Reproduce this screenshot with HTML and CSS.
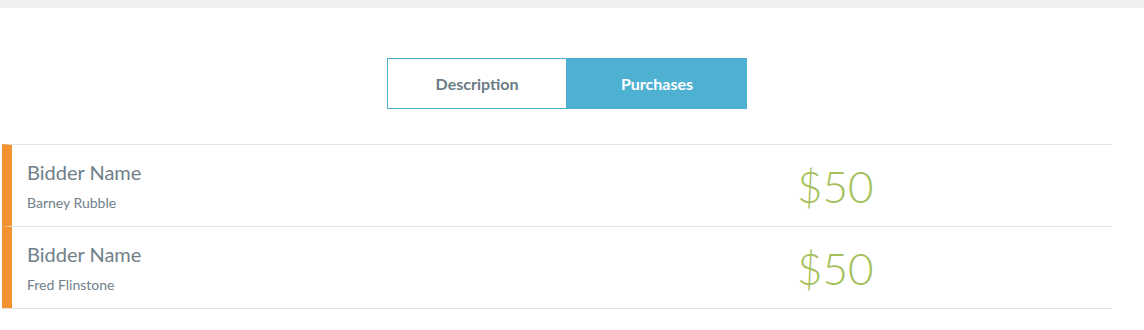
FILE: index.html
```html
<!DOCTYPE html>
<html>
<head>
<meta charset="utf-8">
<link rel="stylesheet" href="styles.css">
</head>
<body>
<div class="topbar"></div>
<div class="tabs-wrap">
  <div class="tabs">
    <div class="tab">Description</div>
    <div class="tab active">Purchases</div>
  </div>
</div>
<div class="list">
  <div class="row">
    <div class="info">
      <div class="label">Bidder Name</div>
      <div class="name">Barney Rubble</div>
    </div>
    <div class="price">$50</div>
  </div>
  <div class="row">
    <div class="info">
      <div class="label">Bidder Name</div>
      <div class="name">Fred Flinstone</div>
    </div>
    <div class="price">$50</div>
  </div>
</div>
</body>
</html>
```

FILE: styles.css
```css
html, body {
  margin: 0;
  padding: 0;
  background: #fff;
  font-family: Lato, "Open Sans", sans-serif;
}
.topbar {
  height: 8px;
  background: #efefef;
}
.tabs-wrap {
  width: 1134px;
  display: flex;
  justify-content: center;
  margin-top: 50px;
}
.tabs {
  display: flex;
}
.tab {
  width: 178px;
  height: 49px;
  border: 1px solid #4db0d0;
  display: flex;
  align-items: center;
  justify-content: center;
  font-size: 16px;
  font-weight: 700;
  color: #6b7c85;
}
.tab.active {
  background: #4fb1d1;
  color: #fff;
}
.list {
  margin-top: 35px;
  margin-left: 2px;
  width: 1110px;
  border-bottom: 1px solid #e4e4e4;
}
.row {
  display: flex;
  align-items: center;
  height: 81px;
  border-top: 1px solid #e4e4e4;
  border-left: 10px solid #f49231;
}
.info {
  flex: 1;
  padding-left: 15px;
  padding-top: 2px;
}
.label {
  font-size: 20px;
  color: #6f8089;
  line-height: 24px;
  margin-top: -2px;
}
.name {
  font-size: 14px;
  color: #6f8089;
  margin-top: 11px;
  line-height: 16px;
}
.price {
  width: 315px;
  font-size: 44px;
  font-weight: 300;
  color: #a5c05a;
  line-height: 50px;
}
```
